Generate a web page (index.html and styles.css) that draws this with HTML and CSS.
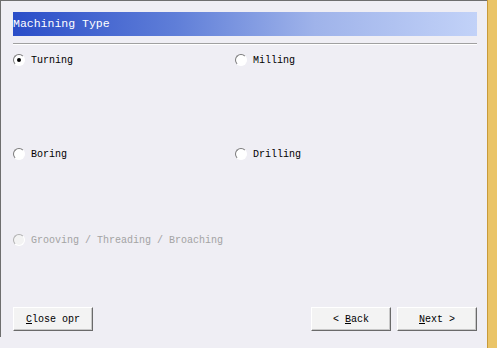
FILE: index.html
```html
<!DOCTYPE html>
<html>
<head>
<meta charset="utf-8">
<link rel="stylesheet" href="styles.css">
</head>
<body>
<div class="page">
  <div class="panel">
    <div class="title">Machining Type</div>
    <div class="sep"></div>
    <div class="options">
      <label class="opt"><span class="radio checked"></span><span>Turning</span></label>
      <label class="opt"><span class="radio"></span><span>Milling</span></label>
      <label class="opt row2"><span class="radio"></span><span>Boring</span></label>
      <label class="opt row2"><span class="radio"></span><span>Drilling</span></label>
      <label class="opt row3 disabled"><span class="radio"></span><span>Grooving / Threading / Broaching</span></label>
    </div>
    <div class="buttons">
      <button class="btn"><u>C</u>lose opr</button>
      <div class="spacer"></div>
      <button class="btn">&lt; <u>B</u>ack</button>
      <button class="btn"><u>N</u>ext &gt;</button>
    </div>
  </div>
  <div class="strip"></div>
</div>
</body>
</html>
```
FILE: styles.css
```css
html, body {
  margin: 0;
  padding: 0;
  background: #efeef4;
}
.page {
  display: flex;
  width: 497px;
  height: 348px;
  font-family: "Liberation Mono", "DejaVu Sans Mono", monospace;
  font-size: 10px;
  color: #000;
}
.panel {
  width: 487px;
  height: 337px;
  border-top: 1px solid #6e6e6e;
  border-left: 1px solid #6e6e6e;
  padding: 11px 10px 0 12px;
  box-sizing: border-box;
  display: flex;
  flex-direction: column;
  flex: none;
}
.title {
  height: 24px;
  line-height: 24px;
  background: linear-gradient(to right, #2a4dc8 0%, #5f7ed8 35%, #9fb3ea 65%, #c2d2f8 100%);
  color: #fff;
  font-size: 11.5px;
}
.sep {
  margin-top: 7px;
  height: 1px;
  background: #a0a0a0;
  border-bottom: 1px solid #ffffff;
}
.options {
  display: grid;
  grid-template-columns: 222px 1fr;
  margin-top: 8px;
}
.opt {
  display: flex;
  align-items: center;
  gap: 6px;
  height: 14px;
  white-space: nowrap;
}
.opt.row2 { grid-row: 2; margin-top: 80px; }
.row3 { margin-top: 72px; grid-column: 1 / 3; grid-row: 3; }
.disabled { color: #a3a3a3; }
.radio {
  width: 12px;
  height: 12px;
  box-sizing: border-box;
  border-radius: 50%;
  border: 1.5px solid;
  border-color: #7a7a7a #ffffff #ffffff #7a7a7a;
  background: #fff;
  position: relative;
  flex: none;
}
.disabled .radio {
  border-color: #b0b0b0 #ffffff #ffffff #b0b0b0;
  background: #f3f3f3;
}
.radio.checked::after {
  content: "";
  position: absolute;
  left: 2.5px;
  top: 2.5px;
  width: 4px;
  height: 4px;
  border-radius: 50%;
  background: #000;
}
.buttons {
  display: flex;
  margin-top: 60px;
  gap: 6px;
}
.spacer { flex: 1; }
.btn {
  width: 80px;
  height: 24px;
  font-family: "Liberation Mono", "DejaVu Sans Mono", monospace;
  font-size: 10px;
  color: #000;
  background: #f3f3f3;
  border: 1px solid;
  border-color: #ffffff #6a6a6a #6a6a6a #ffffff;
  box-shadow: inset -1px -1px 0 #c8c8c8;
  padding: 0;
}
.strip {
  width: 10px;
  height: 348px;
  background: #eac467;
  border-left: 1px solid #c89a3a;
  box-sizing: border-box;
  flex: none;
}
```
